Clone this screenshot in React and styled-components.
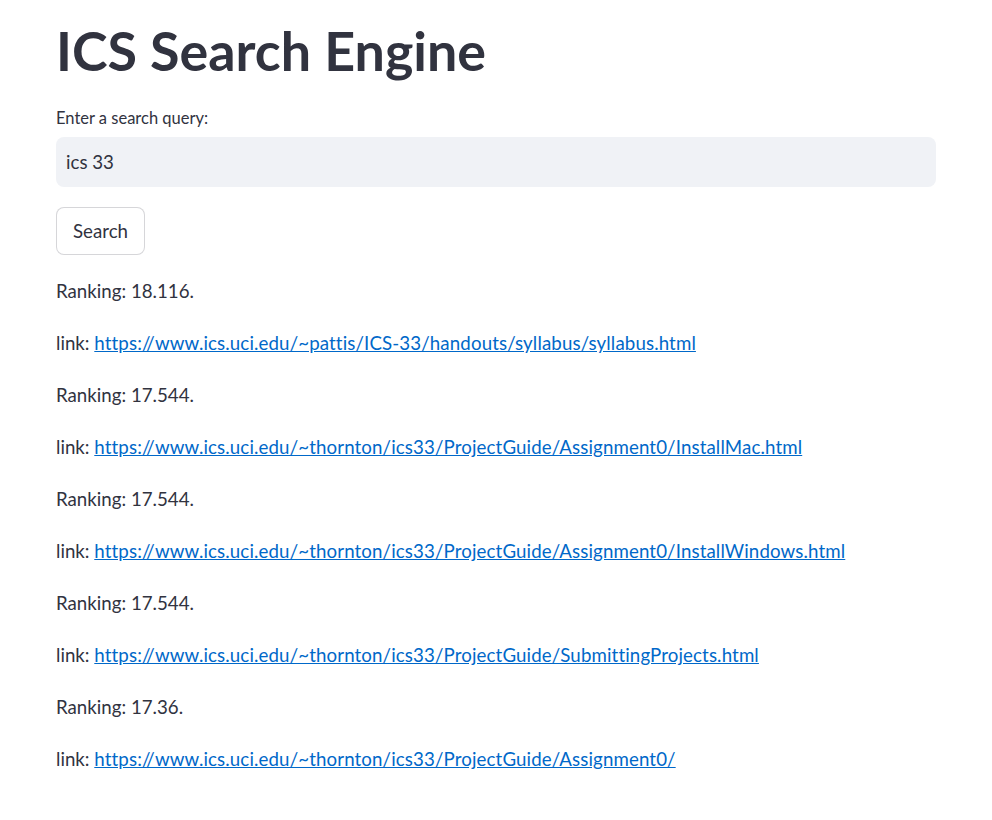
import React, { useState } from 'react';
import styled, { createGlobalStyle } from 'styled-components';

const results = [
  { score: '18.116', url: 'https://www.ics.uci.edu/~pattis/ICS-33/handouts/syllabus/syllabus.html' },
  { score: '17.544', url: 'https://www.ics.uci.edu/~thornton/ics33/ProjectGuide/Assignment0/InstallMac.html' },
  { score: '17.544', url: 'https://www.ics.uci.edu/~thornton/ics33/ProjectGuide/Assignment0/InstallWindows.html' },
  { score: '17.544', url: 'https://www.ics.uci.edu/~thornton/ics33/ProjectGuide/SubmittingProjects.html' },
  { score: '17.36', url: 'https://www.ics.uci.edu/~thornton/ics33/ProjectGuide/Assignment0/' },
];

const App = () => {
  const [query, setQuery] = useState('ics 33');

  return (
    <>
      <GlobalStyle />
      <Main>
        <Title>ICS Search Engine</Title>
        <Field>
          <Label>Enter a search query:</Label>
          <Input value={query} onChange={(e) => setQuery(e.target.value)} />
        </Field>
        <Button>Search</Button>
        <Results>
          {results.map((r, i) => (
            <React.Fragment key={i}>
              <Line>Ranking: {r.score}.</Line>
              <Line>
                link: <Link href={r.url}>{r.url}</Link>
              </Line>
            </React.Fragment>
          ))}
        </Results>
      </Main>
    </>
  );
};

const GlobalStyle = createGlobalStyle`
  body {
    margin: 0;
    background: #ffffff;
    font-family: Lato, "Noto Sans", sans-serif;
    color: rgb(49, 51, 63);
  }
`;

const Main = styled.div`
  width: 880px;
  padding: 0 56px 40px;
  display: flex;
  flex-direction: column;
`;

const Title = styled.h1`
  margin: 17px 0 0;
  font-size: 53.8px;
  font-weight: 700;
  line-height: 66px;
  color: rgb(49, 51, 63);
`;

const Field = styled.div`
  display: flex;
  flex-direction: column;
  margin-top: 25px;
`;

const Label = styled.label`
  font-size: 16.5px;
  line-height: 20px;
  margin-bottom: 9px;
`;

const Input = styled.input`
  height: 50px;
  box-sizing: border-box;
  border: none;
  border-radius: 8px;
  background: #f0f2f6;
  padding: 0 10px;
  font-family: inherit;
  font-size: 18.7px;
  color: rgb(49, 51, 63);
  outline: none;
`;

const Button = styled.button`
  align-self: flex-start;
  margin-top: 20px;
  height: 48px;
  padding: 0 16px;
  border: 1px solid rgba(49, 51, 63, 0.2);
  border-radius: 8px;
  background: #ffffff;
  font-family: inherit;
  font-size: 18.7px;
  color: rgb(49, 51, 63);
  cursor: pointer;
`;

const Results = styled.div`
  display: flex;
  flex-direction: column;
  gap: 26px;
  margin-top: 23px;
`;

const Line = styled.p`
  margin: 0;
  font-size: 18.7px;
  line-height: 26px;
`;

const Link = styled.a`
  color: rgb(0, 104, 201);
  text-decoration: underline;
  letter-spacing: 0.12px;
`;

export default App;
